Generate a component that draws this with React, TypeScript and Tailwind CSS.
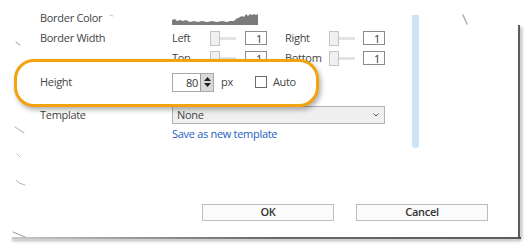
const font = { fontFamily: '"Open Sans", "Noto Sans", sans-serif' };

function Slider() {
  return (
    <div className="relative w-[26px] h-[15px] flex items-center">
      <div className="w-full h-[3px] bg-[#e3e3e3]" />
      <div className="absolute left-0 top-0 w-[10px] h-[15px] border border-[#c4c4c4] bg-[#f0f0f0]" />
    </div>
  );
}

function NumBox({ value }: { value: string }) {
  return (
    <div className="w-[22px] h-[14px] border border-[#8c8c8c] bg-white flex items-center justify-end pr-[4px] text-[11px] leading-none text-[#333]">
      {value}
    </div>
  );
}

function SideField({ label, labelW, gap }: { label: string; labelW: string; gap: string }) {
  return (
    <div className="flex items-center">
      <span className={`${labelW} text-[11px] text-[#444]`}>{label}</span>
      <Slider />
      <div className={gap} />
      <NumBox value="1" />
    </div>
  );
}

function TornEdges() {
  return (
    <svg className="absolute left-0 top-0 pointer-events-none" width="529" height="249">
      <g stroke="#9a9a9a" strokeWidth="1" strokeLinecap="round" fill="none">
        <path d="M16 42 L20 45" />
        <path d="M15 127 L24 133" opacity="0.8" />
        <path d="M17 154 L20 157" opacity="0.7" />
        <path d="M16 180 L19 183 L25 185" opacity="0.7" />
        <path d="M13 232 L25 237" />
        <path d="M110 15 L113 16" opacity="0.6" />
        <path d="M78 18 L80 19" opacity="0.5" />
        <path d="M463 15 L467 24" strokeWidth="1.5" opacity="0.8" />
      </g>
    </svg>
  );
}

export default function App() {
  return (
    <div className="w-[529px] h-[249px] bg-white relative overflow-hidden text-[#444] tracking-[-0.3px]" style={font}>
      <div className="flex h-[237px]">
        <div className="w-[12px]" />
        <div className="flex-1 flex flex-col">
          <div className="flex h-[148px]">
            {/* form */}
            <div className="w-[400px] pl-[28px] pt-[8px] flex flex-col">
              <div className="flex items-center h-[20px]">
                <span className="w-[132px] text-[11px]">Border Color</span>
                <svg width="86" height="12" viewBox="0 0 86 12" className="mt-[2px]">
                  <path
                    d="M0 7 L3 6 L5 8 L8 7 L11 8 L14 7 L18 9 L22 8 L26 9 L30 8 L35 9 L40 8 L45 9 L50 8 L55 9 L58 8 L62 8 L64 6 L66 5 L68 4 L70 3 L72 4 L74 1 L76 3 L78 1 L80 2 L82 1 L84 2 L86 1 L86 12 L0 12 Z"
                    fill="#7b7b7b"
                  />
                </svg>
              </div>
              <div className="flex items-center h-[20px]">
                <span className="w-[132px] text-[11px]">Border Width</span>
                <SideField label="Left" labelW="w-[38px]" gap="w-[9px]" />
                <div className="w-[18px]" />
                <SideField label="Right" labelW="w-[44px]" gap="w-[8px]" />
              </div>
              <div className="flex items-center h-[20px]">
                <span className="w-[132px]" />
                <SideField label="Top" labelW="w-[38px]" gap="w-[9px]" />
                <div className="w-[18px]" />
                <SideField label="Bottom" labelW="w-[44px]" gap="w-[8px]" />
              </div>
              <div className="relative z-[2] flex items-center h-[20px] mt-[4px]">
                <span className="w-[132px] text-[11px]">Height</span>
                <div className="flex h-[19px] w-[42px] border border-[#a8a8a8] bg-white">
                  <span className="flex-1 text-right pr-[2px] text-[11px] leading-[17px] text-[#333]">80</span>
                  <div className="w-[13px] h-full bg-[#d9d9d9] border-l border-[#9a9a9a] flex flex-col items-center justify-center gap-[2px]">
                    <svg width="7" height="4" viewBox="0 0 7 4"><path d="M0 4 L3.5 0 L7 4 Z" fill="#222" /></svg>
                    <svg width="7" height="4" viewBox="0 0 7 4"><path d="M0 0 L3.5 4 L7 0 Z" fill="#222" /></svg>
                  </div>
                </div>
                <span className="ml-[7px] text-[11px]">px</span>
                <div className="ml-[22px] w-[12px] h-[12px] border border-[#6a6a6a] bg-white" />
                <span className="ml-[6px] text-[11px]">Auto</span>
              </div>
              <div className="flex items-center h-[20px] mt-[13px]">
                <span className="w-[132px] text-[11px]">Template</span>
                <div className="w-[213px] h-[18px] border border-[#b3b3b3] bg-[#efefef] flex items-center justify-between pl-[4px] pr-[5px]">
                  <span className="text-[11px] text-[#444]">None</span>
                  <svg width="6" height="4" viewBox="0 0 6 4"><path d="M0.5 0.5 L3 3 L5.5 0.5" stroke="#555" strokeWidth="1" fill="none" /></svg>
                </div>
              </div>
              <div className="flex items-center h-[18px]">
                <span className="w-[132px]" />
                <span className="text-[11px] text-[#1d5fc2]">Save as new template</span>
              </div>
            </div>
            {/* scrollbar */}
            <div className="w-[7px] h-[133px] mt-[15px] rounded-b-full bg-[#cde3f6]" />
          </div>
          <div className="flex mt-[56px] pl-[190px] gap-[22px]">
            <div className="w-[132px] h-[17px] border border-[#bdbdbd] bg-[#fbfbfb] flex items-center justify-center text-[11px] font-semibold text-[#333]">
              OK
            </div>
            <div className="w-[132px] h-[17px] border border-[#bdbdbd] bg-[#fbfbfb] flex items-center justify-center text-[11px] font-semibold text-[#333]">
              Cancel
            </div>
          </div>
        </div>
        <div className="w-[2px] mt-[25px] bg-[#5c5c5c] shadow-[2px_2px_3px_rgba(0,0,0,0.35)]" />
        <div className="w-[9px]" />
      </div>
      <div className="ml-[12px] w-[509px] h-[2px] bg-gradient-to-r from-[#c8c8c8] via-[#6a6a6a] to-[#5c5c5c] shadow-[0_2px_3px_rgba(0,0,0,0.35)]" />

      {/* highlight callout */}
      <div className="absolute left-[14px] top-[59px] w-[305px] h-[48px] rounded-[20px] border-[3px] border-[#f2a30f] bg-white shadow-[2px_3px_5px_rgba(0,0,0,0.3)] z-[1]" />
      <TornEdges />
    </div>
  );
}
